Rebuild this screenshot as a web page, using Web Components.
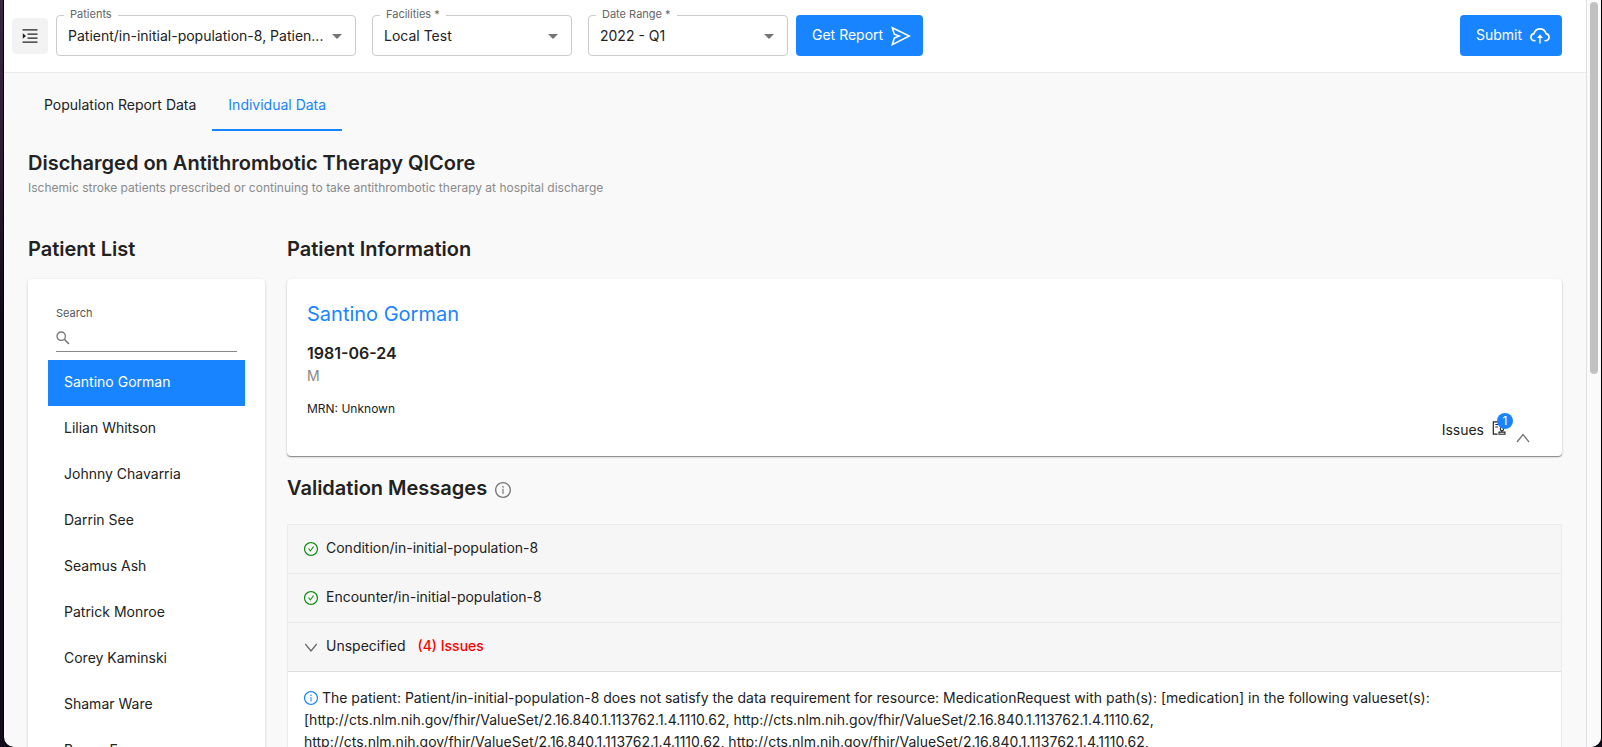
<!DOCTYPE html>
<html lang="en">
<head>
<meta charset="utf-8">
<title>Measure Report</title>
<style>
  html, body { margin: 0; height: 100%; }
  body {
    overflow: hidden;
    background: linear-gradient(#39263f 0, #2d1d33 160px, #100a16 320px, #130d1b 100%);
    font-family: Inter, Roboto, sans-serif;
    font-size: 14px;
    line-height: 22px;
    color: #222;
    --blue: #1884ff;
  }
</style>
</head>
<body>
<app-window>
  <app-toolbar slot="header">
    <select-field class="wide" label="Patients" value="Patient/in-initial-population-8, Patien..."></select-field>
    <select-field label="Facilities *" value="Local Test"></select-field>
    <select-field label="Date Range *" value="2022 - Q1"></select-field>
    <action-button icon="send">Get Report</action-button>
    <action-button slot="end" icon="cloud">Submit</action-button>
  </app-toolbar>
  <tab-bar></tab-bar>
  <measure-heading>
    Discharged on Antithrombotic Therapy QICore
    <span slot="description">Ischemic stroke patients prescribed or continuing to take antithrombotic therapy at hospital discharge</span>
  </measure-heading>
  <report-columns>
    <patient-list slot="side"></patient-list>
    <patient-card name="Santino Gorman" birthdate="1981-06-24" gender="M" mrn="Unknown" issues="1"></patient-card>
    <validation-messages></validation-messages>
  </report-columns>
</app-window>

<script>
const define = (name, render) => customElements.define(name, class extends HTMLElement {
  connectedCallback() {
    if (this.shadowRoot) return;
    this.attachShadow({ mode: 'open' }).innerHTML =
      '<style>:host,*{box-sizing:border-box}button,input,select{font:inherit;color:inherit;margin:0}</style>' + render(this);
  }
});

const ring = '<path d="M512 64C264.6 64 64 264.6 64 512s200.6 448 448 448 448-200.6 448-448S759.4 64 512 64zm0 820c-205.4 0-372-166.6-372-372s166.6-372 372-372 372 166.6 372 372-166.6 372-372 372z"/>';
const icons = {
  info: ['64 64 896 896', ring + '<path d="M464 336a48 48 0 1096 0 48 48 0 10-96 0zm72 112h-48c-4.4 0-8 3.6-8 8v272c0 4.4 3.6 8 8 8h48c4.4 0 8-3.6 8-8V456c0-4.4-3.6-8-8-8z"/>'],
  check: ['64 64 896 896', ring + '<path d="M699 353h-46.9c-10.2 0-19.9 4.9-25.9 13.3L469 584.3l-71.2-98.8c-6-8.3-15.6-13.3-25.9-13.3H325c-6.5 0-10.3 7.4-6.5 12.7l124.6 172.8a31.8 31.8 0 0051.7 0l210.6-292c3.9-5.3.1-12.7-6.4-12.7z"/>'],
  menu: ['0 0 16 16', '<path d="M.5 1.2h15v1.4H.5zM5.5 5.4h10v1.3h-10zM5.5 9.4h10v1.3h-10zM.5 13.4h15v1.4H.5zM.8 5.3 4 8 .8 10.7z"/>'],
  send: ['0 0 20 20', '<path fill="none" stroke="currentColor" stroke-width="1.6" stroke-linejoin="miter" d="M1.3 1.7 18.300 10 1.3 18.6 3.300 12 8.200 10 3.300 8.200z"/>'],
  cloud: ['0 0 20 20', '<path fill="none" stroke="currentColor" stroke-width="1.6" stroke-linecap="round" d="M4.9 14.8C2.600 14.600.9 13.200.9 11.200c0-2 1.400-3.200 3.100-3.600C4.900 4.700 7.100 2.900 10 2.900s5.100 1.800 6 4.700c1.700.4 3.100 1.600 3.100 3.600 0 2-1.700 3.400-4 3.600"/><path d="M9.300 17.500V12H7.100L10 8.300l2.900 3.700h-2.200v5.500z"/>'],
  up: ['0 0 14 14', '<path fill="none" stroke="currentColor" stroke-width="1.3" d="M1 11 7 3.500 13 11"/>'],
  down: ['0 0 14 14', '<path fill="none" stroke="currentColor" stroke-width="1.2" d="M1.300 4 7 11 12.700 4"/>'],
  search: ['0 0 14 14', '<circle cx="5.2" cy="5.2" r="4.2" fill="none" stroke="currentColor" stroke-width="1.3"/><path fill="none" stroke="currentColor" stroke-width="1.6" d="m8.300 8.300 4.700 4.700"/>'],
  audit: ['0 0 14 14', '<path fill="none" stroke="currentColor" stroke-width="1.2" d="M5.500 13.200H1.300V.8h9.500V5M3.300 3.500h5M3.300 6h2.500"/><circle cx="9.9" cy="8" r="1.7" fill="none" stroke="currentColor" stroke-width="1.1"/><path fill="none" stroke="currentColor" stroke-width="1.1" d="M9.900 9.700v1.200M7 13.300v-2.200h6v2.200z"/>']
};
define('ui-icon', el => {
  const [box, body] = icons[el.getAttribute('name')];
  return `<style>:host{display:inline-block;flex:none;width:14px;height:14px}svg{display:block;width:100%;height:100%}</style>
    <svg viewBox="${box}" fill="currentColor" aria-hidden="true">${body}</svg>`;
});

define('app-window', () => `<style>
    :host{display:flex;height:100vh;margin:0 1px 0 4px;background:#f9f9f9;border-radius:0 0 10px 10px;overflow:hidden;box-shadow:0 0 0 1px #000}
    .page{flex:1;min-width:0;overflow:hidden}
    main{padding:8px 24px 0}
    .track{width:15px;border-left:1px solid #e1e1e1;padding:2px 3px;background:#fafafa}
    .thumb{height:50%;border-radius:4px;background:#c1c1c1}
  </style>
  <div class="page"><slot name="header"></slot><main><slot></slot></main></div>
  <div class="track"><div class="thumb"></div></div>`);

define('app-toolbar', () => `<style>
    :host{display:flex;align-items:center;height:73px;padding:0 24px 1px 8px;background:#fff;border-bottom:1px solid #e9e9e9}
    .menu{display:grid;place-items:center;width:36px;height:36px;padding:0;border:0;border-radius:4px;background:#f3f3f3;margin-right:8px}
    .menu ui-icon{width:16px;height:16px}
    .fields{display:flex;align-items:center;flex:1}
    ::slotted(select-field){margin-right:16px}
    ::slotted(select-field:nth-of-type(3)){margin-right:8px}
  </style>
  <button class="menu" aria-label="Toggle menu"><ui-icon name="menu"></ui-icon></button>
  <div class="fields"><slot></slot></div><slot name="end"></slot>`);

define('select-field', el => `<style>
    :host{display:block;position:relative;width:200px}
    :host(.wide){width:300px}
    select{appearance:none;display:block;width:100%;height:41px;padding:0 32px 0 11px;border:1px solid #ccc;border-radius:4px;background:#fff}
    label{position:absolute;left:8px;top:-9px;padding:0 6px;background:#fff;font-size:11px;line-height:16px;color:#666}
    i{position:absolute;right:14px;top:19px;border:5px solid transparent;border-top-color:#757575;border-bottom:0;pointer-events:none}
  </style>
  <label for="s">${el.getAttribute('label')}</label>
  <select id="s"><option>${el.getAttribute('value')}</option></select><i></i>`);

define('action-button', el => `<style>
    :host{display:block}
    button{display:flex;align-items:center;gap:8px;height:41px;padding:0 12px 0 16px;border:0;border-radius:4px;background:var(--blue);color:#fff}
    .label{padding-bottom:2px}
    ui-icon{width:20px;height:20px}
  </style>
  <button><span class="label"><slot></slot></span><ui-icon name="${el.getAttribute('icon')}"></ui-icon></button>`);

define('tab-bar', () => `<style>
    :host{display:flex}
    button{height:50px;padding:0 16px;border:0;border-bottom:2px solid transparent;background:none}
    [aria-selected=true]{color:var(--blue);border-color:var(--blue)}
  </style>
  <button role="tab" aria-selected="false">Population Report Data</button>
  <button role="tab" aria-selected="true">Individual Data</button>`);

define('measure-heading', () => `<style>
    :host{display:block;padding:18px 0 36px}
    h1{margin:0;font-size:20px;line-height:28px;font-weight:600}
    p{margin:0;font-size:12px;line-height:22px;color:#8a8a8a}
  </style>
  <h1><slot></slot></h1><p><slot name="description"></slot></p>`);

define('report-columns', () => `<style>
    :host{display:grid;grid-template-columns:237px minmax(0,1fr);column-gap:22px}
  </style>
  <aside><slot name="side"></slot></aside><section><slot></slot></section>`);

define('patient-list', () => `<style>
    :host{display:block}
    h2{margin:0 0 16px;font-size:20px;line-height:28px;font-weight:600}
    .card{padding:24px 20px;background:#fff;border-radius:4px;box-shadow:0 1px 3px #0003}
    form{margin:0 8px 8px}
    label{display:block;font-size:11px;line-height:20px;color:#555}
    .box{display:flex;align-items:center;gap:8px;height:29px;padding-top:2px;border-bottom:1px solid #888;color:#757575}
    input{flex:1;min-width:0;border:0;outline:0;padding:0;background:none}
    ul{list-style:none;margin:0;padding:0}
    button{display:block;width:100%;height:46px;padding:0 16px 2px;border:0;background:none;text-align:left}
    [aria-current]{background:var(--blue);color:#fff}
  </style>
  <h2>Patient List</h2>
  <div class="card">
    <form><label for="q">Search</label><div class="box"><ui-icon name="search"></ui-icon><input id="q" type="search"></div></form>
    <ul>${['Santino Gorman', 'Lilian Whitson', 'Johnny Chavarria', 'Darrin See', 'Seamus Ash', 'Patrick Monroe', 'Corey Kaminski', 'Shamar Ware', 'Benny Evans']
      .map((n, i) => `<li><button${i ? '' : ' aria-current="true"'}>${n}</button></li>`).join('')}</ul>
  </div>`);

define('patient-card', el => `<style>
    :host{display:block}
    h2{margin:0 0 16px;font-size:20px;line-height:28px;font-weight:600}
    .card{height:177px;padding:20px 32px 0 20px;background:#fff;border-radius:4px;box-shadow:0 1px 1px #0006,0 1px 3px #0002}
    h3{margin:0 0 12px;font-size:20px;line-height:30px;font-weight:400;color:var(--blue)}
    .born{font-size:16px;line-height:24px;font-weight:600}
    .sex{color:#888}
    .mrn{margin-top:12px;font-size:12px;line-height:20px}
    .issues{display:flex;justify-content:flex-end;align-items:flex-start}
    .note{position:relative;display:flex;margin:2px 10px 0 8px}
    .badge{position:absolute;left:5px;top:-8px;width:16px;height:16px;border-radius:8px;background:var(--blue);color:#fff;font-size:12px;line-height:16px;text-align:center}
    button{display:flex;padding:12px 0 0;border:0;background:none;color:#757575}
  </style>
  <h2>Patient Information</h2>
  <div class="card">
    <h3>${el.getAttribute('name')}</h3>
    <div class="born">${el.getAttribute('birthdate')}</div>
    <div class="sex">${el.getAttribute('gender')}</div>
    <div class="mrn">MRN: ${el.getAttribute('mrn')}</div>
    <div class="issues"><span>Issues</span><span class="note"><ui-icon name="audit"></ui-icon><span class="badge">${el.getAttribute('issues')}</span></span>
    <button aria-label="Collapse issues"><ui-icon name="up"></ui-icon></button></div>
  </div>`);

const vs = 'http://cts.nlm.nih.gov/fhir/ValueSet/2.16.840.1.113762.1.4.1110.62';
define('validation-messages', () => `<style>
    :host{display:block}
    h2{display:flex;align-items:center;gap:8px;margin:18px 0 22px;font-size:20px;line-height:28px;font-weight:600}
    h2 ui-icon{width:16px;height:16px;margin-top:4px;color:#777}
    .panel{border:1px solid #ebebeb;background:#f6f6f6}
    button{display:flex;align-items:center;gap:8px;width:100%;height:49px;padding:0 16px 2px;border:0;border-bottom:1px solid #ebebeb;background:none;text-align:left}
    button ui-icon{margin-top:2px}
    button[aria-expanded]{border-color:#ddd}
    .ok{color:#0a8a0a}
    .caret{color:#666}
    strong{margin-left:4px;font-weight:500;color:#f00}
    p{margin:0;padding:15px 16px;background:#fff}
    p ui-icon{color:var(--blue);vertical-align:-2px}
  </style>
  <h2>Validation Messages <ui-icon name="info"></ui-icon></h2>
  <div class="panel">
    <button><ui-icon class="ok" name="check"></ui-icon>Condition/in-initial-population-8</button>
    <button><ui-icon class="ok" name="check"></ui-icon>Encounter/in-initial-population-8</button>
    <button aria-expanded="true"><ui-icon class="caret" name="down"></ui-icon>Unspecified<strong>(4) Issues</strong></button>
    <p><ui-icon name="info"></ui-icon> The patient: Patient/in-initial-population-8 does not satisfy the data requirement for resource: MedicationRequest with path(s): [medication] in the following valueset(s): [${vs}, ${vs}, ${vs}, ${vs}, ${vs}]</p>
  </div>`);
</script>
</body>
</html>
